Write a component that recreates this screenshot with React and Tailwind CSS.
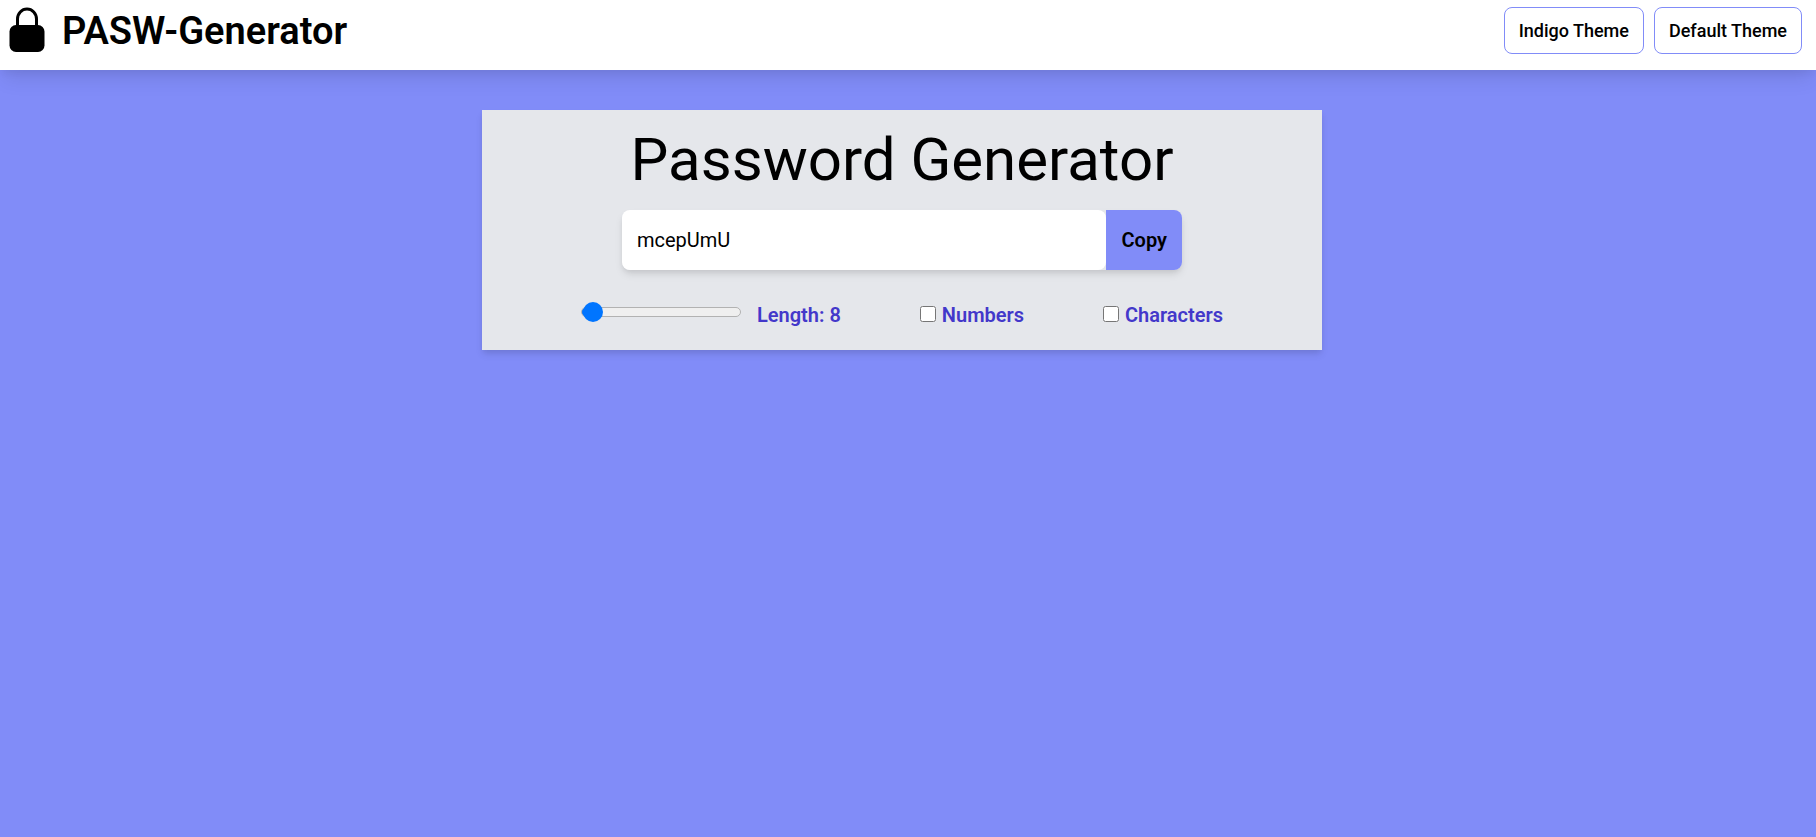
import { useState } from "react";

const themeButton =
  "rounded-lg border border-[#818cf8] bg-white px-[14px] py-3 text-lg leading-[21px] font-medium text-black";

function LockIcon() {
  return (
    <svg viewBox="0 0 36 46" className="h-[46px] w-9" aria-hidden="true">
      <path d="M8.5 20V12a9.5 10 0 0 1 19 0v8" fill="none" stroke="#000" strokeWidth="3" />
      <rect x="0.5" y="18" width="35" height="27" rx="6.5" fill="#000" />
    </svg>
  );
}

export default function App() {
  const [indigo, setIndigo] = useState(true);
  const [length, setLength] = useState(8);
  const password = "mcepUmU";

  return (
    <div
      className={`min-h-screen font-[Roboto,sans-serif] text-black ${indigo ? "bg-[#818cf8]" : "bg-[#9ca3af]"}`}
    >
      <header className="flex h-[70px] items-start justify-between bg-white pr-[14px] pl-[9px] pt-[7px] shadow-[0_12px_19px_-4px_rgba(0,0,0,0.1),0_5px_8px_-2px_rgba(0,0,0,0.05)]">
        <div className="flex items-start gap-[17px]">
          <LockIcon />
          <h1 className="text-[38px] leading-[48px] font-semibold">PASW-Generator</h1>
        </div>
        <nav className="flex gap-[10px]">
          <button type="button" className={themeButton} onClick={() => setIndigo(true)}>
            Indigo Theme
          </button>
          <button type="button" className={themeButton} onClick={() => setIndigo(false)}>
            Default Theme
          </button>
        </nav>
      </header>

      <main className="pt-10 pr-3">
        <section className="mx-auto flex max-w-[840px] flex-col items-center bg-[#e5e7eb] pt-5 pb-5 shadow-[0_5px_8px_-1px_rgba(0,0,0,0.1),0_3px_5px_-1px_rgba(0,0,0,0.06)]">
          <h2 className="text-6xl leading-[60px]">Password Generator</h2>

          <div className="mt-5 flex h-[60px] w-2/3 rounded-lg shadow-[0_5px_8px_-1px_rgba(0,0,0,0.1),0_3px_5px_-1px_rgba(0,0,0,0.06)]">
            <input
              type="text"
              readOnly
              value={password}
              aria-label="Password"
              className="min-w-0 flex-1 rounded-lg bg-white px-[15px] text-xl outline-none"
            />
            <button
              type="button"
              onClick={() => navigator.clipboard?.writeText(password)}
              className="rounded-r-lg bg-[#818cf8] pr-[15px] pl-4 text-xl font-semibold"
            >
              Copy
            </button>
          </div>

          <div className="mt-[30px] flex items-center gap-[79px] text-xl leading-[30px] font-semibold text-[#4338ca]">
            <div className="flex items-center gap-4">
              <input
                id="length"
                type="range"
                min="7"
                max="100"
                value={length}
                onChange={(e) => setLength(Number(e.target.value))}
                style={{ "--fill": `${Math.max(12, ((length - 7) / 93) * 160)}px` }}
                className="mb-[6px] h-5 w-40 appearance-none bg-transparent [&::-webkit-slider-runnable-track]:h-[10px] [&::-webkit-slider-runnable-track]:rounded-full [&::-webkit-slider-runnable-track]:border [&::-webkit-slider-runnable-track]:border-[#b2b2b2] [&::-webkit-slider-runnable-track]:bg-[linear-gradient(to_right,#0075ff_var(--fill),#efefef_var(--fill))] [&::-webkit-slider-thumb]:-mt-[6px] [&::-webkit-slider-thumb]:size-5 [&::-webkit-slider-thumb]:appearance-none [&::-webkit-slider-thumb]:rounded-full [&::-webkit-slider-thumb]:bg-[#0075ff]"
              />
              <label htmlFor="length">Length: {length}</label>
            </div>
            <div className="flex items-center gap-[6px]">
              <input id="numbers" type="checkbox" className="mb-[3px] size-4" />
              <label htmlFor="numbers">Numbers</label>
            </div>
            <div className="flex items-center gap-[6px]">
              <input id="characters" type="checkbox" className="mb-[3px] size-4" />
              <label htmlFor="characters">Characters</label>
            </div>
          </div>
        </section>
      </main>
    </div>
  );
}
